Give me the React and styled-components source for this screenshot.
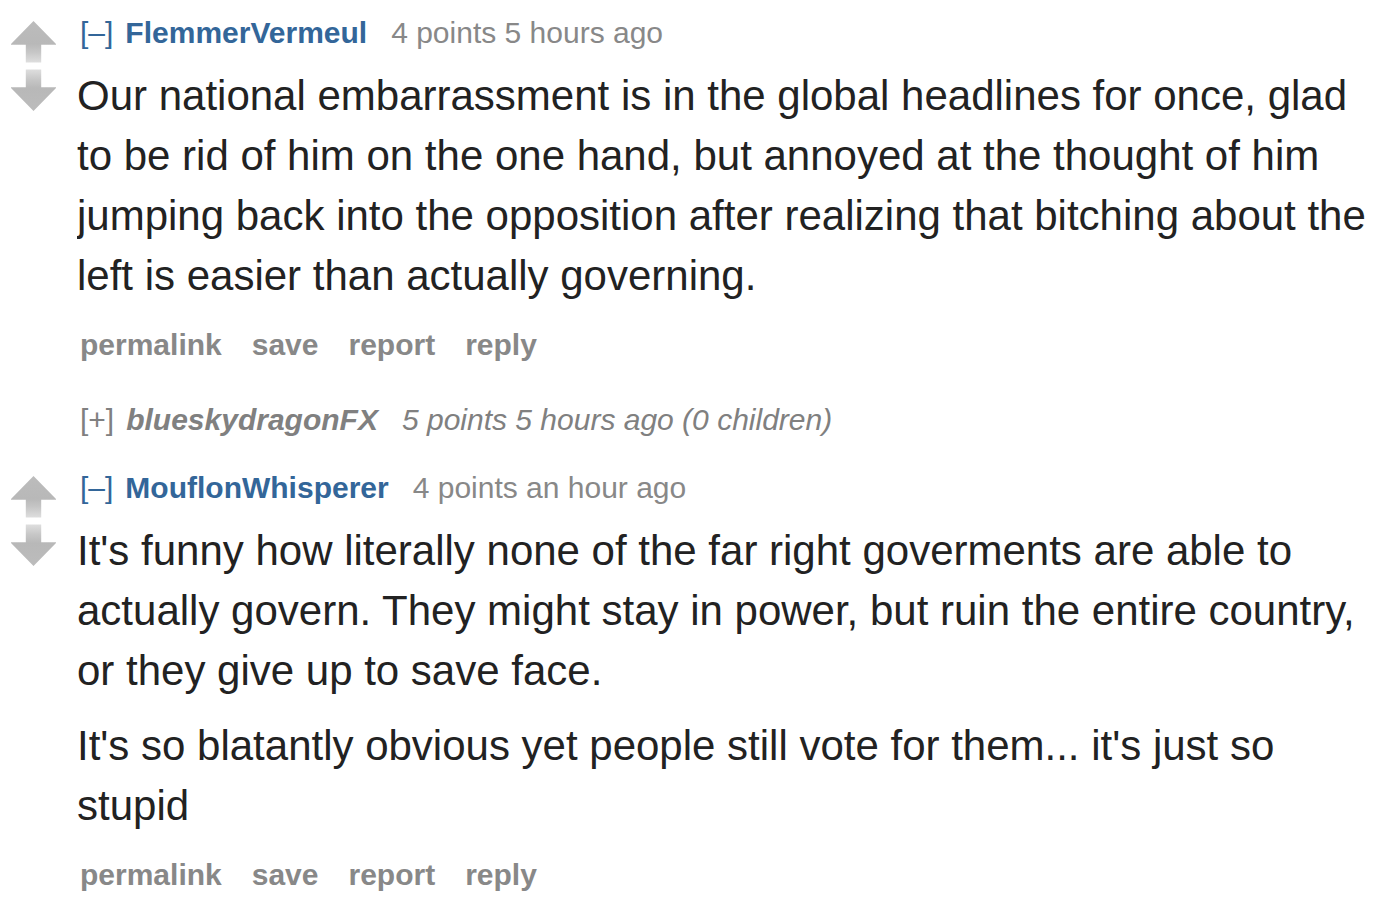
import React from "react";
import styled, { createGlobalStyle } from "styled-components";

const GlobalStyle = createGlobalStyle`
  * {
    box-sizing: border-box;
  }
  body {
    margin: 0;
    background: #fff;
    font-family: "Liberation Sans", Arial, Helvetica, sans-serif;
  }
`;

const Thread = styled.main`
  padding: 15px 15px 0 11px;
`;

const Wrapper = styled.article`
  display: flex;
  align-items: flex-start;
  margin-bottom: ${(props) => (props.$collapsed ? "32px" : "39px")};
  &:last-child {
    margin-bottom: 0;
  }
`;

const Votes = styled.div`
  flex: 0 0 66px;
  display: flex;
  flex-direction: column;
  align-items: flex-start;
  gap: 6px;
  padding-top: 6px;
`;

const VoteButton = styled.button`
  display: block;
  padding: 0;
  border: none;
  background: none;
  cursor: pointer;
`;

const Arrow = styled.svg`
  display: block;
  width: 45px;
  height: 42px;
  transform: ${(props) => (props.$down ? "scaleY(-1)" : "none")};
`;

const Entry = styled.div`
  flex: 1;
  min-width: 0;
`;

const Tagline = styled.header`
  display: flex;
  align-items: baseline;
  padding: 0 3px;
  font-size: 30px;
  line-height: 36px;
  color: ${(props) => (props.$collapsed ? "#808080" : "#888")};
  font-style: ${(props) => (props.$collapsed ? "italic" : "normal")};
`;

const Expand = styled.a`
  margin-right: 12px;
  color: ${(props) => (props.$collapsed ? "#808080" : "#369")};
  font-style: normal;
  text-decoration: none;
`;

const Author = styled.a`
  margin-right: 24px;
  color: ${(props) => (props.$collapsed ? "#808080" : "#369")};
  font-weight: bold;
  text-decoration: none;
`;

const Body = styled.div`
  margin-top: 15px;
  overflow: hidden;
  font-size: 42px;
  line-height: 60px;
  color: #222;
`;

const Paragraph = styled.p`
  margin: 0;
  & + & {
    margin-top: 15px;
  }
`;

const Buttons = styled.ul`
  display: flex;
  gap: 30px;
  margin: 21px 0 0;
  padding: 0 3px;
  list-style: none;
  font-size: 30px;
  line-height: 36px;
`;

const ButtonLink = styled.a`
  color: #888;
  font-weight: bold;
  text-decoration: none;
`;

const actions = ["permalink", "save", "report", "reply"];

const comments = [
  {
    author: "FlemmerVermeul",
    info: "4 points 5 hours ago",
    text: [
      "Our national embarrassment is in the global headlines for once, glad to be rid of him on the one hand, but annoyed at the thought of him jumping back into the opposition after realizing that bitching about the left is easier than actually governing.",
    ],
  },
  {
    author: "blueskydragonFX",
    info: "5 points 5 hours ago (0 children)",
    collapsed: true,
  },
  {
    author: "MouflonWhisperer",
    info: "4 points an hour ago",
    text: [
      "It's funny how literally none of the far right goverments are able to actually govern. They might stay in power, but ruin the entire country, or they give up to save face.",
      "It's so blatantly obvious yet people still vote for them... it's just so stupid",
    ],
  },
];

const VoteArrow = ({ id, label, down }) => (
  <VoteButton type="button" aria-label={label}>
    <Arrow viewBox="0 0 45 42" $down={down} aria-hidden="true">
      <defs>
        <linearGradient id={id} x1="0" y1="0" x2="0" y2="1">
          <stop offset="0" stopColor="#bcbcbc" />
          <stop offset="0.55" stopColor="#b8b8b8" />
          <stop offset="0.75" stopColor="#c6c6c6" />
          <stop offset="1" stopColor="#dedede" />
        </linearGradient>
      </defs>
      <path
        d="M22.5 0 L45 22.9 V23.8 H30.2 V41.5 H14.8 V23.8 H0 V22.9 Z"
        fill={`url(#${id})`}
      />
    </Arrow>
  </VoteButton>
);

const Comment = ({ author, info, text, collapsed }) => (
  <Wrapper $collapsed={collapsed}>
    <Votes>
      {!collapsed && (
        <>
          <VoteArrow id={`${author}-up`} label="upvote" />
          <VoteArrow id={`${author}-down`} label="downvote" down />
        </>
      )}
    </Votes>
    <Entry>
      <Tagline $collapsed={collapsed}>
        <Expand href="#" $collapsed={collapsed}>
          {collapsed ? "[+]" : "[–]"}
        </Expand>
        <Author href="#" $collapsed={collapsed}>
          {author}
        </Author>
        <span>{info}</span>
      </Tagline>
      {!collapsed && (
        <>
          <Body>
            {text.map((p) => (
              <Paragraph key={p}>{p}</Paragraph>
            ))}
          </Body>
          <Buttons>
            {actions.map((action) => (
              <li key={action}>
                <ButtonLink href="#">{action}</ButtonLink>
              </li>
            ))}
          </Buttons>
        </>
      )}
    </Entry>
  </Wrapper>
);

const App = () => (
  <>
    <GlobalStyle />
    <Thread>
      {comments.map((comment) => (
        <Comment key={comment.author} {...comment} />
      ))}
    </Thread>
  </>
);

export default App;
